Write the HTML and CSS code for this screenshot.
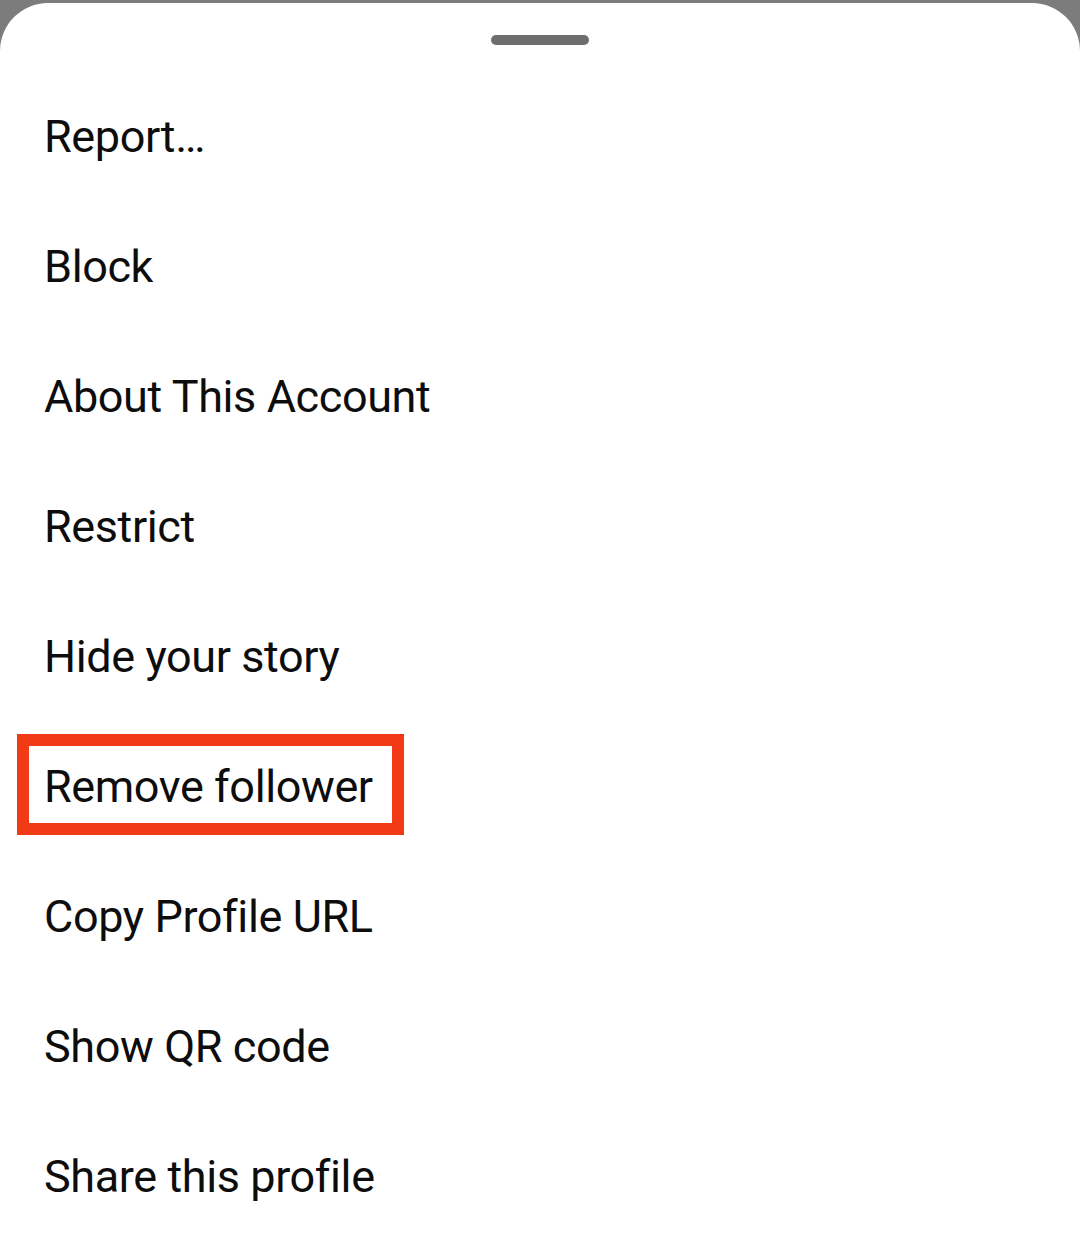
FILE: index.html
```html
<!DOCTYPE html>
<html lang="en">
<head>
    <meta charset="UTF-8">
    <meta name="viewport" content="width=device-width, initial-scale=1.0">
    <title>Profile options</title>
    <link rel="stylesheet" href="styles.css">
</head>
<body>
    <div class="sheet">
        <div class="handle"></div>
        <ul class="menu">
            <li class="menu-item">Report…</li>
            <li class="menu-item">Block</li>
            <li class="menu-item">About This Account</li>
            <li class="menu-item">Restrict</li>
            <li class="menu-item">Hide your story</li>
            <li class="menu-item marked">Remove follower</li>
            <li class="menu-item">Copy Profile URL</li>
            <li class="menu-item">Show QR code</li>
            <li class="menu-item">Share this profile</li>
        </ul>
    </div>
</body>
</html>
```

FILE: styles.css
```css
body {
    margin: 0;
    padding: 3px 0 0;
    background-color: #7c7c7c;
    font-family: Roboto, 'Noto Sans', sans-serif;
    height: 100vh;
    box-sizing: border-box;
    overflow: hidden;
}

.sheet {
    background-color: #fff;
    border-radius: 48px 48px 0 0;
    height: 100%;
    padding-top: 32px;
    box-sizing: border-box;
}

.handle {
    width: 98px;
    height: 10px;
    margin: 0 auto;
    border-radius: 5px;
    background-color: #6e6e6e;
}

.menu {
    list-style: none;
    margin: 26px 0 0;
    padding: 0;
}

.menu-item {
    position: relative;
    height: 130px;
    display: flex;
    align-items: center;
    padding-left: 44px;
    font-size: 45px;
    letter-spacing: -0.4px;
    color: #0d0d0d;
}

/* red annotation box */
.marked::after {
    content: "";
    position: absolute;
    left: 17px;
    top: 13px;
    width: 387px;
    height: 101px;
    border: 12px solid #f33a17;
    box-sizing: border-box;
}
```
